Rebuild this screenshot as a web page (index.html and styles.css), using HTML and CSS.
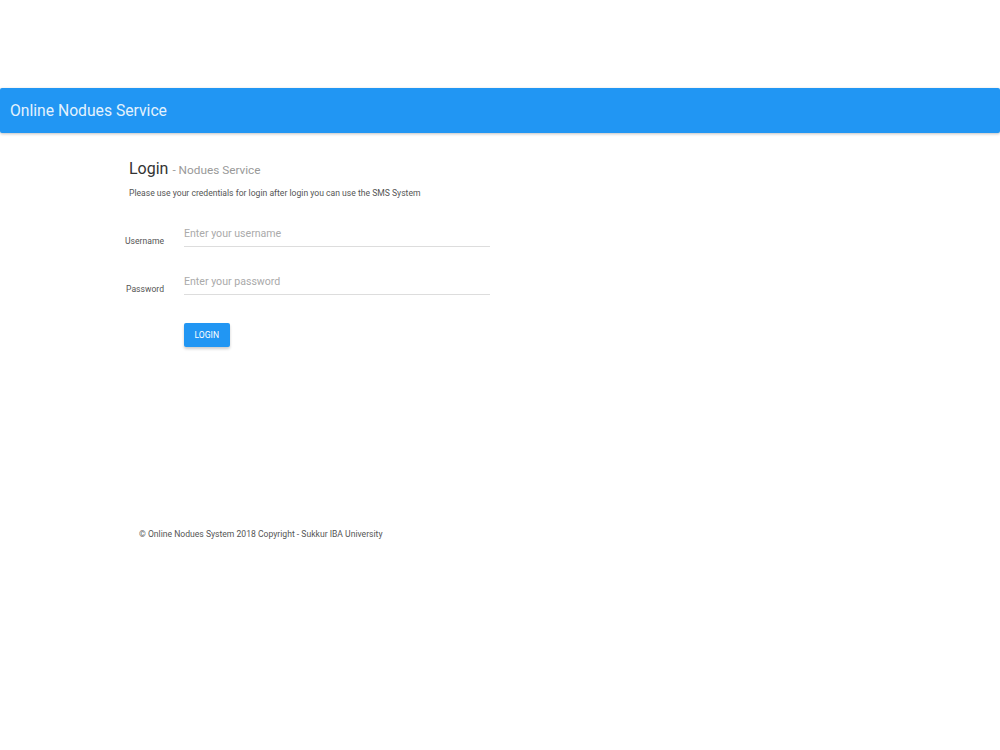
FILE: index.html
```html
<!DOCTYPE html>
<html>
<head>
    <title>Online Nodues Service</title>
    <link rel="stylesheet" href="styles.css">
</head>
<body>
    <div class="top-space"></div>

    <nav class="navbar">
        <span class="brand">Online Nodues Service</span>
    </nav>

    <div class="container">
        <h1 class="title">Login <small>- Nodues Service</small></h1>
        <p class="intro">Please use your credentials for login after login you can use the SMS System</p>

        <form class="login-form" onsubmit="return false;">
            <div class="form-row">
                <label for="username">Username</label>
                <input type="text" id="username" placeholder="Enter your username">
            </div>
            <div class="form-row">
                <label for="password">Password</label>
                <input type="password" id="password" placeholder="Enter your password">
            </div>
            <div class="form-row btn-row">
                <span class="spacer"></span>
                <button class="login-btn" type="submit">LOGIN</button>
            </div>
        </form>
    </div>

    <footer class="footer">
        &copy; Online Nodues System 2018 Copyright - Sukkur IBA University
    </footer>
</body>
</html>
```

FILE: styles.css
```css
body { font-family: Roboto, "Liberation Sans", sans-serif; margin: 0; color: #333; background: #fff; }
.top-space { height: 88px; }
.navbar { background: #2196f3; height: 45px; display: flex; align-items: center; padding-left: 10px; border-radius: 2px; box-shadow: 0 1px 3px rgba(0,0,0,0.25); }
.brand { color: #e3f2fd; font-size: 15.7px; }
.container { padding-left: 129px; padding-top: 26px; }
.title { font-size: 16px; font-weight: 400; margin: 0; color: #333; }
.title small { font-size: 11.8px; color: #999; }
.intro { font-size: 8.6px; color: #555; margin: 10px 0 0; }
.login-form { margin-top: 29px; margin-left: -20px; }
.form-row { display: flex; align-items: flex-end; margin-bottom: 28px; }
.form-row label { width: 55px; text-align: right; font-size: 8.6px; color: #555; margin-right: 20px; padding-bottom: 1px; }
.form-row input { width: 306px; border: none; border-bottom: 1px solid #ddd; font-family: inherit; font-size: 10.6px; padding: 0 0 6px; outline: none; color: #333; }
.form-row input::placeholder { color: #aaa; }
.btn-row { margin-top: 3px; }
.spacer { width: 75px; }
.login-btn { background: #2196f3; color: #fff; border: none; border-radius: 2px; font-family: inherit; font-size: 8.6px; padding: 0 10.5px; height: 24px; box-shadow: 0 2px 3px rgba(0,0,0,0.2); cursor: pointer; }
.footer { font-size: 8.6px; color: #555; padding-left: 139px; margin-top: 182px; }
```
